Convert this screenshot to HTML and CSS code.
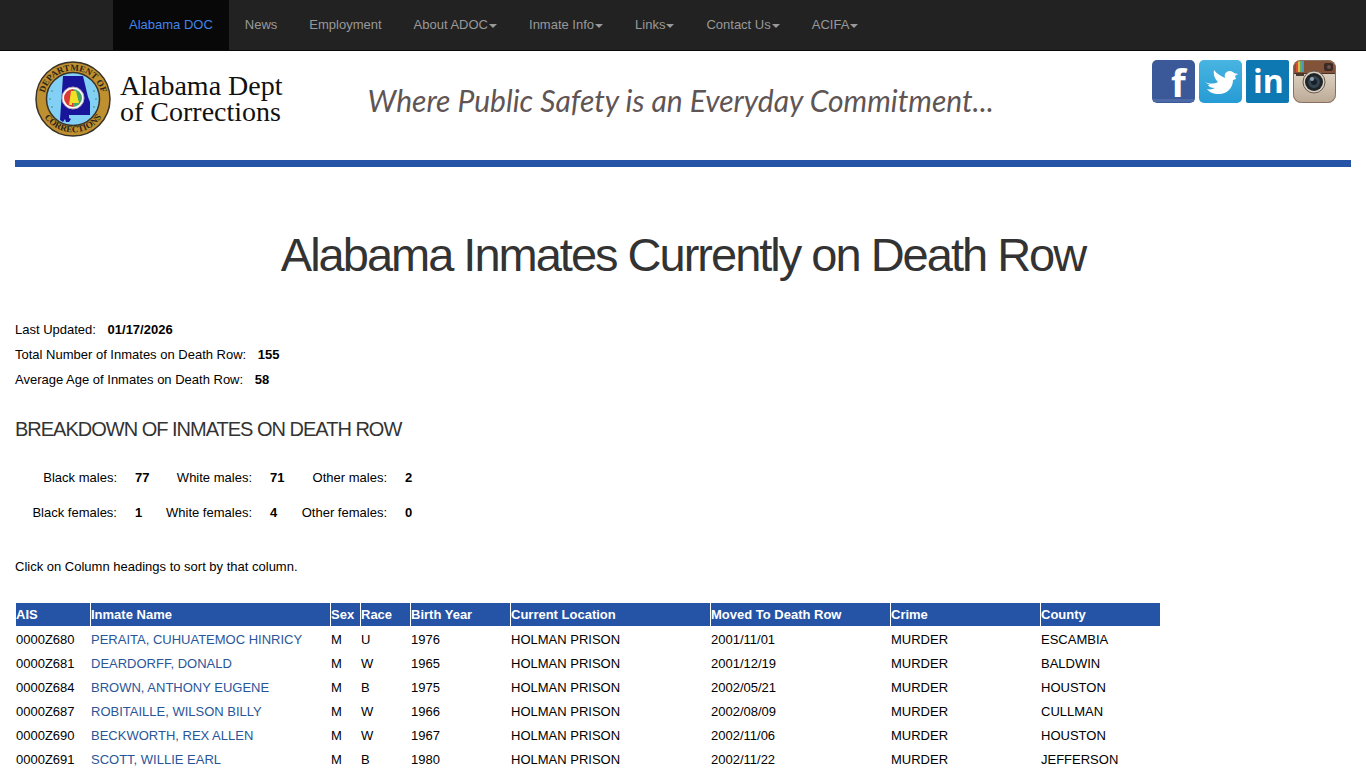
FILE: index.html
```html
<!DOCTYPE html>
<html lang="en">
<head>
  <meta charset="UTF-8" />
  <title>Alabama Inmates Currently on Death Row</title>
  <meta name="viewport" content="width=device-width, initial-scale=1.0" />
  <link rel="stylesheet" href="styles.css">
</head>
<body>
  <nav class="navbar">
    <ul class="nav">
      <li><a class="active" href="#">Alabama DOC</a></li>
      <li><a href="#">News</a></li>
      <li><a href="#">Employment</a></li>
      <li><a href="#">About ADOC<span class="caret"></span></a></li>
      <li><a href="#">Inmate Info<span class="caret"></span></a></li>
      <li><a href="#">Links<span class="caret"></span></a></li>
      <li><a href="#">Contact Us<span class="caret"></span></a></li>
      <li><a href="#">ACIFA<span class="caret"></span></a></li>
    </ul>
  </nav>

  <header class="header">
    <a class="logo" href="#">
      <svg class="seal" viewBox="0 0 76 76" aria-hidden="true">
        <defs>
          <path id="arc-top" d="M9.500 44 A29 29 0 1 1 66.500 44" />
          <path id="arc-bottom" d="M4.500 45 A34.500 34.500 0 0 0 71.500 45" />
        </defs>
        <circle cx="38" cy="38" r="37" fill="#bf9030" stroke="#3a3226" stroke-width="1.500" />
        <circle cx="38" cy="38" r="26.500" fill="#82d0f5" stroke="#3a3226" stroke-width="1.500" />
        <text class="seal-text"><textPath href="#arc-top" startOffset="50%" text-anchor="middle">DEPARTMENT OF</textPath></text>
        <text class="seal-text"><textPath href="#arc-bottom" startOffset="50%" text-anchor="middle">CORRECTIONS</textPath></text>
        <path d="M28 15 L48 15 L53 36 L55 41 L55 54 L34 54 L34 57 L36 58 L34 61 L31 61 L30 58 L28 61 L25 59 Z" fill="#18159a" />
        <circle cx="38" cy="37" r="11" fill="#fff" stroke="#b7a3b8" stroke-width="1" />
        <path d="M38 28 A9 9 0 0 0 38 46 Z" fill="#d93a35" />
        <path d="M38 28 A9 9 0 0 1 38 46 Z" fill="#4aa865" />
        <path d="M36 30 h5 l3 12 h-7 v2 h-3 z" fill="#f3df25" />
        <g fill="#55a6a2">
          <circle cx="17" cy="30" r="1" /><circle cx="15" cy="38" r="1" /><circle cx="17" cy="46" r="1" />
          <circle cx="59" cy="30" r="1" /><circle cx="61" cy="38" r="1" /><circle cx="59" cy="46" r="1" />
        </g>
      </svg>
      <span class="logo-text">Alabama Dept<br/>of Corrections</span>
    </a>

    <div class="tagline">Where Public Safety is an Everyday Commitment...</div>

    <div class="social">
      <a href="#" aria-label="Facebook">
        <svg viewBox="0 0 43 43">
          <rect width="43" height="43" rx="5" fill="#3b5998" />
          <rect y="39" x="1" width="41" height="3" rx="1" fill="#4c69a8" />
          <text x="19" y="37" class="icon-f">f</text>
        </svg>
      </a>
      <a href="#" aria-label="Twitter">
        <svg viewBox="0 0 43 43">
          <defs>
            <linearGradient id="tw" x1="0" y1="0" x2="0" y2="1">
              <stop offset="0" stop-color="#48b5e1" />
              <stop offset="1" stop-color="#269bd4" />
            </linearGradient>
          </defs>
          <rect width="43" height="43" rx="5" fill="url(#tw)" />
          <path d="M6 22 C10 24 15 24 19 22 C16 19 14 15 15 10 C18 14 22 16 26 18 C25 14 27 11 31 11 C33 11 34 12 35 13 L39 14 L36 16 L37 19 L34 20 C34 28 28 34 20 34 C14 34 10 32 8 29 C11 30 14 29 16 28 C12 28 10 27 9 25 L11 25 C9 24 7 23 6 22 Z" fill="#fff" />
        </svg>
      </a>
      <a href="#" aria-label="LinkedIn">
        <svg viewBox="0 0 43 43">
          <rect width="43" height="43" rx="2" fill="#0e78b2" />
          <text x="7" y="33" class="icon-in">in</text>
        </svg>
      </a>
      <a href="#" aria-label="Instagram">
        <svg viewBox="0 0 43 43">
          <defs>
            <clipPath id="ig"><rect width="43" height="43" rx="8" /></clipPath>
            <linearGradient id="igb" x1="0" y1="0" x2="0" y2="1">
              <stop offset="0" stop-color="#ebe2d4" />
              <stop offset="1" stop-color="#bba995" />
            </linearGradient>
          </defs>
          <g clip-path="url(#ig)">
            <rect width="43" height="43" fill="url(#igb)" />
            <rect width="43" height="14" fill="#835339" />
            <rect x="3" width="2" height="12" fill="#d84b3d" />
            <rect x="5" width="2" height="12" fill="#e3bb45" />
            <rect x="7" width="2" height="12" fill="#69ad54" />
            <rect x="9" width="2" height="12" fill="#4a94bd" />
            <rect y="13" width="43" height="1" fill="#49342a" />
            <rect x="3" y="14" width="8" height="2" fill="#4a3a32" />
          </g>
          <rect x="31" y="3" width="9" height="8" rx="2" fill="#3b2a24" />
          <circle cx="36" cy="7" r="2" fill="#6b5148" />
          <circle cx="21" cy="22" r="11" fill="#d9cfc2" stroke="#685a50" stroke-width="1" />
          <circle cx="21" cy="22" r="9" fill="#1f2427" />
          <circle cx="21" cy="22" r="6" fill="#35444f" />
          <circle cx="21" cy="22" r="3" fill="#15202b" />
          <circle cx="19" cy="19" r="2" fill="#8fa5b5" />
          <rect x=".5" y=".5" width="42" height="42" rx="8" fill="none" stroke="#8a6f5e" />
        </svg>
      </a>
    </div>
  </header>

  <main class="content">
    <h1>Alabama Inmates Currently on Death Row</h1>

    <div class="totals">
      <p>Last Updated: <strong>01/17/2026</strong></p>
      <p>Total Number of Inmates on Death Row: <strong>155</strong></p>
      <p>Average Age of Inmates on Death Row: <strong>58</strong></p>
    </div>

    <h2>BREAKDOWN OF INMATES ON DEATH ROW</h2>

    <table class="breakdown">
      <tr>
        <th>Black males:</th><td>77</td>
        <th>White males:</th><td>71</td>
        <th>Other males:</th><td>2</td>
      </tr>
      <tr>
        <th>Black females:</th><td>1</td>
        <th>White females:</th><td>4</td>
        <th>Other females:</th><td>0</td>
      </tr>
    </table>

    <p class="hint">Click on Column headings to sort by that column.</p>

    <table class="inmates">
      <colgroup>
        <col class="col-ais"><col class="col-name"><col class="col-sex"><col class="col-race"><col class="col-year">
        <col class="col-location"><col class="col-moved"><col class="col-crime"><col class="col-county">
      </colgroup>
      <thead>
        <tr>
          <th><a href="#">AIS</a></th>
          <th><a href="#">Inmate Name</a></th>
          <th><a href="#">Sex</a></th>
          <th><a href="#">Race</a></th>
          <th><a href="#">Birth Year</a></th>
          <th><a href="#">Current Location</a></th>
          <th><a href="#">Moved To Death Row</a></th>
          <th><a href="#">Crime</a></th>
          <th><a href="#">County</a></th>
        </tr>
      </thead>
      <tbody>
        <tr><td>0000Z680</td><td><a href="#">PERAITA, CUHUATEMOC HINRICY</a></td><td>M</td><td>U</td><td>1976</td><td>HOLMAN PRISON</td><td>2001/11/01</td><td>MURDER</td><td>ESCAMBIA</td></tr>
        <tr><td>0000Z681</td><td><a href="#">DEARDORFF, DONALD</a></td><td>M</td><td>W</td><td>1965</td><td>HOLMAN PRISON</td><td>2001/12/19</td><td>MURDER</td><td>BALDWIN</td></tr>
        <tr><td>0000Z684</td><td><a href="#">BROWN, ANTHONY EUGENE</a></td><td>M</td><td>B</td><td>1975</td><td>HOLMAN PRISON</td><td>2002/05/21</td><td>MURDER</td><td>HOUSTON</td></tr>
        <tr><td>0000Z687</td><td><a href="#">ROBITAILLE, WILSON BILLY</a></td><td>M</td><td>W</td><td>1966</td><td>HOLMAN PRISON</td><td>2002/08/09</td><td>MURDER</td><td>CULLMAN</td></tr>
        <tr><td>0000Z690</td><td><a href="#">BECKWORTH, REX ALLEN</a></td><td>M</td><td>W</td><td>1967</td><td>HOLMAN PRISON</td><td>2002/11/06</td><td>MURDER</td><td>HOUSTON</td></tr>
        <tr><td>0000Z691</td><td><a href="#">SCOTT, WILLIE EARL</a></td><td>M</td><td>B</td><td>1980</td><td>HOLMAN PRISON</td><td>2002/11/22</td><td>MURDER</td><td>JEFFERSON</td></tr>
      </tbody>
    </table>
  </main>
</body>
</html>
```

FILE: styles.css
```css
* {
  box-sizing: border-box;
}

body {
  margin: 0;
  font-family: "Liberation Sans", Arial, sans-serif;
  font-size: 13px;
  line-height: 20px;
  color: #000;
  background: #fff;
}

a {
  color: #2a5699;
  text-decoration: none;
}

.navbar {
  background: #222;
  border-bottom: 1px solid #080808;
}

.nav {
  display: flex;
  max-width: 1140px;
  margin: 0 auto;
  padding: 0;
  list-style: none;
}

.nav a {
  display: flex;
  align-items: center;
  padding: 15px 16px;
  color: #999;
}

.nav .active {
  background: #080808;
  color: #4285e8;
}

.caret {
  margin-left: 1px;
  margin-top: 2px;
  border-top: 4px solid #999;
  border-left: 4px solid transparent;
  border-right: 4px solid transparent;
}

.header {
  display: flex;
  align-items: flex-start;
  padding: 9px 30px 0 35px;
}

.logo {
  display: flex;
  align-items: center;
  gap: 9px;
  padding-top: 1px;
  color: #111;
}

.seal {
  width: 76px;
  height: 76px;
}

.seal-text {
  font-family: "Liberation Serif", serif;
  font-size: 9px;
  font-weight: bold;
  fill: #2c2418;
}

.logo-text {
  font-family: "Liberation Serif", "Times New Roman", serif;
  font-size: 28px;
  line-height: 26px;
  white-space: nowrap;
}

.tagline {
  margin-left: 85px;
  padding-top: 20px;
  font-family: Lato, cursive;
  font-size: 30px;
  font-style: italic;
  line-height: 40px;
  color: #5f5555;
  white-space: nowrap;
}

.social {
  display: flex;
  gap: 4px;
  margin-left: auto;
}

.social a,
.social svg {
  display: block;
  width: 43px;
  height: 43px;
  overflow: visible;
}

.icon-f,
.icon-in {
  font-family: "Open Sans", sans-serif;
  font-weight: bold;
  fill: #fff;
}

.icon-f {
  font-size: 38px;
}

.icon-in {
  font-size: 32px;
}

.content {
  margin: 23px 15px 0;
  border-top: 7px solid #2553a5;
}

h1 {
  margin: 58px 0 32px;
  font-size: 47px;
  font-weight: normal;
  line-height: 60px;
  letter-spacing: -2px;
  text-align: center;
  color: #333;
}

.totals p {
  margin: 0;
  line-height: 25px;
}

.totals strong {
  margin-left: 8px;
}

h2 {
  margin: 22px 0 16px;
  font-size: 20px;
  font-weight: normal;
  line-height: 30px;
  letter-spacing: -1px;
  color: #333;
}

.breakdown {
  border-spacing: 0;
}

.breakdown th,
.breakdown td {
  height: 35px;
  padding: 0;
}

.breakdown th {
  width: 102px;
  font-weight: normal;
  text-align: right;
}

.breakdown td {
  width: 33px;
  padding-left: 18px;
  font-weight: bold;
}

.hint {
  margin: 27px 0 25px;
}

.inmates {
  width: 1146px;
  table-layout: fixed;
  border-spacing: 1px;
}

.inmates th,
.inmates td {
  height: 23px;
  padding: 0;
  text-align: left;
}

.inmates td {
  padding-top: 2px;
}

.inmates th {
  background: #2553a5;
}

.inmates th a {
  color: #fff;
}

.col-ais { width: 74px; }
.col-name { width: 239px; }
.col-sex { width: 29px; }
.col-race { width: 49px; }
.col-year { width: 99px; }
.col-location { width: 199px; }
.col-moved { width: 179px; }
.col-crime { width: 149px; }
.col-county { width: 119px; }
```
